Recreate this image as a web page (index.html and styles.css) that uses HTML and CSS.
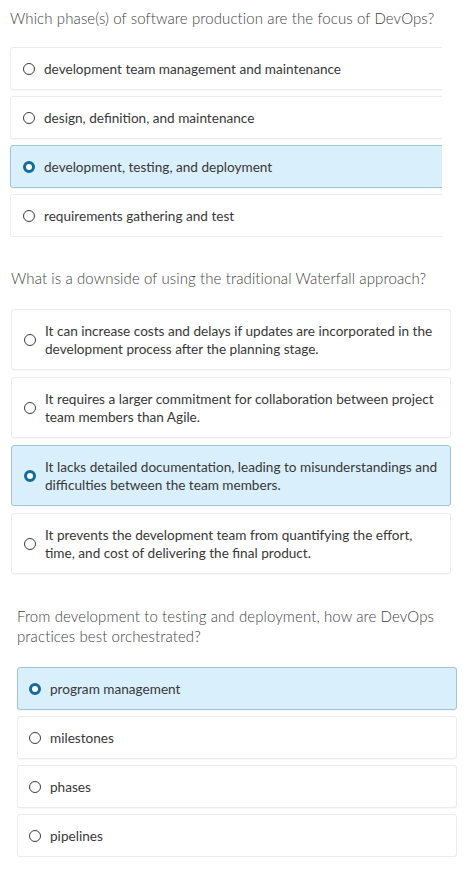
FILE: index.html
```html
<!DOCTYPE html>
<html lang="en">
<head>
<meta charset="utf-8">
<title>DevOps quiz</title>
<link rel="stylesheet" href="styles.css">
</head>
<body>
<section class="quiz quiz-a">
  <p class="question">Which phase(s) of software production are the focus of DevOps?</p>
  <div class="clip">
    <ul class="options">
      <li class="option"><span class="radio"></span><span class="label">development team management and maintenance</span></li>
      <li class="option"><span class="radio"></span><span class="label">design, definition, and maintenance</span></li>
      <li class="option selected"><span class="radio"></span><span class="label">development, testing, and deployment</span></li>
      <li class="option"><span class="radio"></span><span class="label">requirements gathering and test</span></li>
    </ul>
  </div>
</section>
<section class="quiz quiz-b">
  <p class="question">What is a downside of using the traditional Waterfall approach?</p>
  <ul class="options">
    <li class="option tall"><span class="radio"></span><span class="label">It can increase costs and delays if updates are incorporated in the development process after the planning stage.</span></li>
    <li class="option tall"><span class="radio"></span><span class="label">It requires a larger commitment for collaboration between project team members than Agile.</span></li>
    <li class="option tall selected"><span class="radio"></span><span class="label">It lacks detailed documentation, leading to misunderstandings and difficulties between the team members.</span></li>
    <li class="option tall"><span class="radio"></span><span class="label">It prevents the development team from quantifying the effort, time, and cost of delivering the final product.</span></li>
  </ul>
</section>
<section class="quiz quiz-c">
  <p class="question">From development to testing and deployment, how are DevOps practices best orchestrated?</p>
  <ul class="options">
    <li class="option selected"><span class="radio"></span><span class="label">program management</span></li>
    <li class="option"><span class="radio"></span><span class="label">milestones</span></li>
    <li class="option"><span class="radio"></span><span class="label">phases</span></li>
    <li class="option"><span class="radio"></span><span class="label">pipelines</span></li>
  </ul>
</section>
</body>
</html>
```
FILE: styles.css
```css
* { box-sizing: border-box; }
html, body { margin: 0; padding: 0; background: #fff; }
body {
  font-family: Lato, "Open Sans", Arial, sans-serif;
  color: #2e2e2e;
  width: 474px;
}
.quiz { display: flex; flex-direction: column; }
.question {
  margin: 0;
  font-size: 15px;
  font-weight: 300;
  line-height: 20px;
  color: #3f3f3f;
  letter-spacing: 0.1px;
}
.options {
  list-style: none;
  margin: 0;
  padding: 0;
  display: flex;
  flex-direction: column;
}
.option {
  display: flex;
  align-items: center;
  background: #fff;
  border: 1px solid #ececec;
  border-radius: 3px;
  box-shadow: 0 1px 1px rgba(0,0,0,0.03);
  font-size: 13.6px;
  line-height: 18px;
  color: #383838;
}
.option.selected {
  background: #d9effb;
  border-color: #9fc6d8;
}
.radio {
  flex: none;
  width: 12px;
  height: 12px;
  border-radius: 50%;
  border: 1.6px solid #3c3c3c;
  margin-right: 9px;
}
.selected .radio {
  border: 3.5px solid #14699d;
  background: #fff;
}

/* section A */
.quiz-a { padding: 8px 0 0 10px; }
.quiz-a .question { margin-bottom: 19px; }
.quiz-a .clip { width: 432px; overflow: hidden; }
.quiz-a .options { width: 442px; gap: 6px; }
.quiz-a .option { height: 43px; padding-left: 12px; }

/* section B */
.quiz-b { padding: 31px 0 0 11px; }
.quiz-b .question { margin-bottom: 21px; }
.quiz-b .options { width: 440px; gap: 7px; }
.quiz-b .option { height: 61px; padding: 0 6px 0 12px; }

/* section C */
.quiz-c { padding: 32px 0 0 17px; }
.quiz-c .question { margin-bottom: 21px; width: 420px; }
.quiz-c .options { width: 440px; gap: 6px; }
.quiz-c .option { height: 43px; padding-left: 11px; }
```
